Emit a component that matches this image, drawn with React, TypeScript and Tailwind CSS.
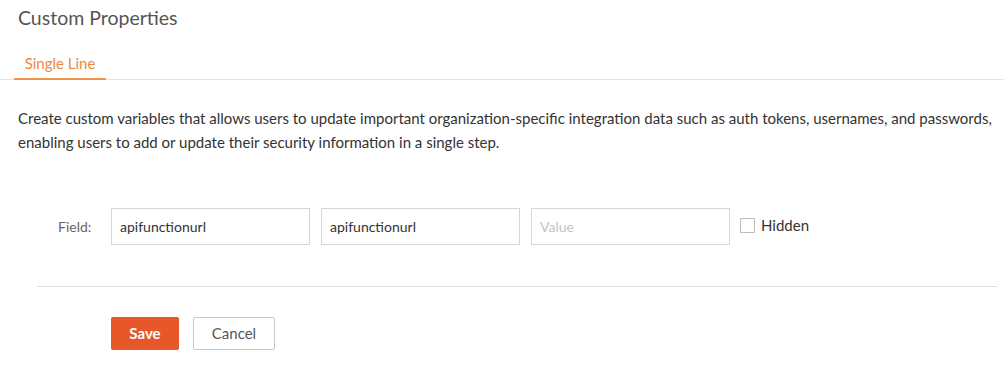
export default function App() {
  return (
    <div className="w-[1004px] h-[369px] bg-white font-['Lato','Open_Sans',sans-serif] text-[#333]">
      <h1 className="pl-[18px] pt-[4px] h-[44px] text-[19.5px] leading-[28px] text-[#555]">Custom Properties</h1>
      <div className="flex border-b border-[#e3e3e3] h-[36px] items-end">
        <div className="ml-[14px] w-[92px] pb-[6px] border-b-2 border-[#f0924a] -mb-px text-center text-[15px] leading-[18px] text-[#f0883e]">
          Single Line
        </div>
      </div>
      <p className="mt-[26px] pl-[18px] pr-[8px] text-[15px] leading-[24px] text-[#333]">
        Create custom variables that allows users to update important organization-specific integration data such as auth tokens, usernames, and passwords, enabling users to add or update their security information in a single step.
      </p>
      <div className="mt-[54px] flex items-center">
        <label className="w-[111px] pl-[58px] text-[14px] text-[#666]">Field:</label>
        <div className="flex gap-[11px]">
          <input readOnly value="apifunctionurl" className="w-[199px] h-[37px] border border-[#d6d6d6] px-[8px] text-[14px] text-[#333] outline-none" />
          <input readOnly value="apifunctionurl" className="w-[199px] h-[37px] border border-[#d6d6d6] px-[8px] text-[14px] text-[#333] outline-none" />
          <input readOnly placeholder="Value" className="w-[199px] h-[37px] border border-[#d6d6d6] px-[8px] text-[14px] text-[#333] placeholder:text-[#c4c4c4] outline-none" />
        </div>
        <label className="ml-[10px] flex items-center gap-[6px] -mt-[2px] text-[15px] text-[#333]">
          <span className="w-[15px] h-[15px] border border-[#bdbdbd] bg-white" />
          Hidden
        </label>
      </div>
      <div className="mt-[41px] ml-[37px] w-[960px] border-t border-[#dedede]" />
      <div className="mt-[30px] pl-[111px] flex gap-[14px]">
        <button className="w-[68px] h-[33px] rounded-[2px] bg-[#e8572a] text-white text-[15px] font-bold">Save</button>
        <button className="w-[82px] h-[33px] rounded-[2px] border border-[#c8c8c8] bg-white text-[#555] text-[15px]">Cancel</button>
      </div>
    </div>
  );
}
